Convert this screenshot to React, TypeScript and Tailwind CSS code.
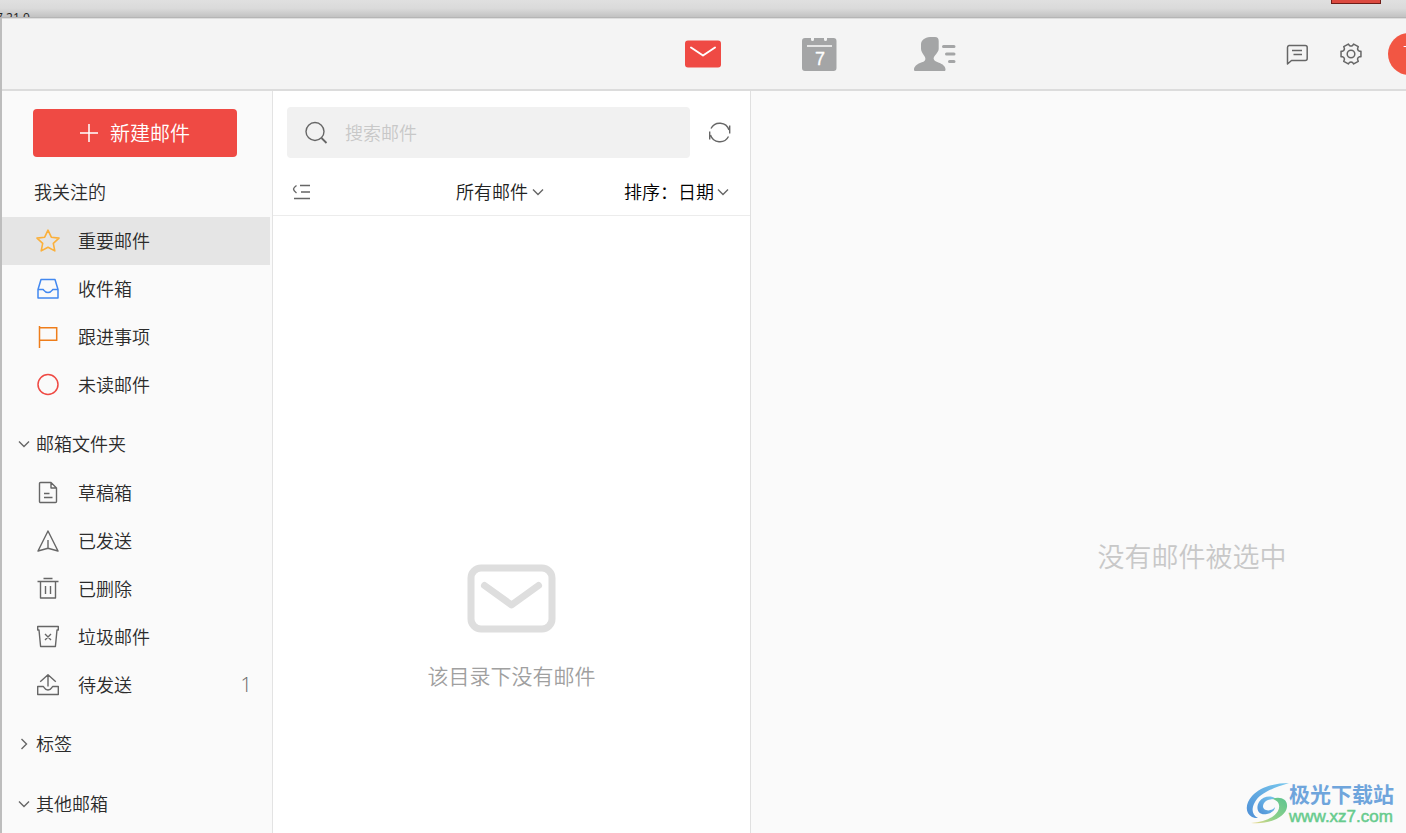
import React from "react";

const FONT =
  "font-['Noto_Sans_CJK_SC',sans-serif] font-[350]";

function Svg({
  w = 24,
  h = 24,
  className = "",
  sw = 1.4,
  children,
}: {
  w?: number;
  h?: number;
  className?: string;
  sw?: number;
  children: React.ReactNode;
}) {
  return (
    <svg
      width={w}
      height={h}
      viewBox={`0 0 ${w} ${h}`}
      fill="none"
      stroke="currentColor"
      strokeWidth={sw}
      strokeLinejoin="round"
      aria-hidden="true"
      className={`shrink-0 ${className}`}
    >
      {children}
    </svg>
  );
}

const gearPath = (() => {
  const at = (deg: number, r: number) => {
    const a = (deg * Math.PI) / 180;
    return `${(12 + r * Math.cos(a)).toFixed(2)} ${(12 + r * Math.sin(a)).toFixed(2)}`;
  };
  let d = "";
  for (let k = 0; k < 6; k++) {
    const a = k * 60;
    d += `${k ? "L" : "M"}${at(a - 15, 10.3)}L${at(a + 15, 10.3)}L${at(a + 19, 8.8)}Q${at(a + 30, 7.2)} ${at(a + 41, 8.8)}`;
  }
  return d + "Z";
})();

function Chevron({ dir = "down", className = "" }: { dir?: "down" | "right"; className?: string }) {
  return (
    <Svg w={12} h={12} className={`text-[#666] ${className}`}>
      <path d={dir === "down" ? "M1 3.5l5 5 5-5" : "M3.5 1l5 5-5 5"} strokeLinejoin="miter" />
    </Svg>
  );
}

type Item = { label: string; icon: React.ReactNode; active?: boolean; count?: number };

const followed: Item[] = [
  {
    label: "重要邮件",
    active: true,
    icon: (
      <Svg className="text-[#fbb03b]" sw={1.6}>
        <path d="M12 1.2l3.3 7 7.7.9-5.7 5.3 1.5 7.5L12 18.3l-6.8 3.6 1.5-7.5L1 9.1l7.7-.9z" />
      </Svg>
    ),
  },
  {
    label: "收件箱",
    icon: (
      <Svg className="text-[#4288f0]" sw={1.5}>
        <path d="M5 2.5h14l3 10v8.5H2v-8.5zM2 12.5h5.2c1 1.2 1.8 3 4.8 3s3.8-1.8 4.8-3H22" />
      </Svg>
    ),
  },
  {
    label: "跟进事项",
    icon: (
      <Svg className="text-[#ee7d1a]" sw={1.5}>
        <path d="M3.5 1v22M3.5 2.7h17.2v12.6H3.5" strokeLinejoin="miter" />
      </Svg>
    ),
  },
  {
    label: "未读邮件",
    icon: (
      <Svg className="text-[#ef4a44]" sw={1.5}>
        <circle cx="12" cy="11.5" r="10" />
      </Svg>
    ),
  },
];

const folders: Item[] = [
  {
    label: "草稿箱",
    icon: (
      <Svg>
        <path d="M4.5 1.5H15L20.5 7v13.5a1 1 0 0 1-1 1h-15a1 1 0 0 1-1-1v-18a1 1 0 0 1 1-1zM15 1.5V7h5.5M8 12.5h5.5M8 16.5h8.5" />
      </Svg>
    ),
  },
  {
    label: "已发送",
    icon: (
      <Svg>
        <path d="M12 2L2 22l10-2.7L22 22zM12 11v8.3" />
      </Svg>
    ),
  },
  {
    label: "已删除",
    icon: (
      <Svg>
        <path d="M7.5 1.5h9M1.5 4.5h21M4.5 4.5V21h15V4.5M9.5 9v8M14.5 9v8" />
      </Svg>
    ),
  },
  {
    label: "垃圾邮件",
    icon: (
      <Svg>
        <path d="M1.7 1.5h20.6V5H21l-1.6 16.5H4.6L3 5H1.7zM9 9l6 6M15 9l-6 6" />
      </Svg>
    ),
  },
  {
    label: "待发送",
    count: 1,
    icon: (
      <Svg>
        <path d="M4.2 8.8L12 1.8l7.8 7M12 2v11.5M1.7 13.5h5.6c1.2 1 1.2 3.5 4.7 3.5s3.5-2.5 4.7-3.5h5.6v8H1.7z" />
      </Svg>
    ),
  },
];

function NavItems({ items }: { items: Item[] }) {
  return (
    <ul>
      {items.map((it) => (
        <li key={it.label}>
          <a
            href="#"
            className={`mr-0.5 flex h-12 items-center gap-[18px] pr-[18px] pl-[34px] text-[18px] text-[#2b2b2b] ${it.active ? "bg-[#e5e5e5]" : ""}`}
          >
            <span className="text-[#666]">{it.icon}</span>
            <span className="flex-1 pb-0.5">{it.label}</span>
            {it.count !== undefined && (
              <span className="font-['Open_Sans',sans-serif] text-[20px] text-[#666]">{it.count}</span>
            )}
          </a>
        </li>
      ))}
    </ul>
  );
}

function GroupHeader({ label, dir }: { label: string; dir: "down" | "right" }) {
  return (
    <button
      type="button"
      aria-expanded={dir === "down"}
      className="mt-2.5 flex h-[50px] w-full items-center gap-1.5 pl-4 text-[18px] text-[#2b2b2b]"
    >
      <Chevron dir={dir} />
      <span className="pb-0.5">{label}</span>
    </button>
  );
}

function TitleStrip() {
  return (
    <div className="flex h-[18px] items-start justify-between overflow-hidden border-b border-[#b5b5b5] bg-linear-to-b from-[#e0e0e0] via-[#dadada] to-[#c2c2c2]">
      <span className="-ml-1 pt-2.5 font-['Open_Sans',sans-serif] text-[12px] leading-4 font-normal text-[#222]">7.21.0</span>
      <span className="mr-[25px] h-1 w-[50px] border border-t-0 border-[#6f1d18] bg-[#dc4a40]" />
    </div>
  );
}

function Header() {
  return (
    <header className="flex h-[73px] items-center overflow-hidden border-t border-b-2 border-t-[#dedede] border-b-[#dcdcdc] bg-[#f4f4f4]">
      <nav className="flex flex-1 pl-[45.8%]">
        <button type="button" aria-label="邮件" className="flex w-[116px] shrink-0 justify-center">
          <Svg w={36} h={34}>
            <rect y="3.5" width="36" height="27" rx="3" fill="#ef4a44" stroke="none" />
            <path d="M6 10.500l12 8 12-8" stroke="#fff" strokeWidth="2" strokeLinecap="round" />
          </Svg>
        </button>
        <button type="button" aria-label="日历" className="flex w-[116px] shrink-0 justify-center">
          <Svg w={36} h={34}>
            <path
              d="M4 1H10v1.500a1.500 1.500 0 0 0 3 0V1h10v1.500a1.500 1.500 0 0 0 3 0V1h6.500a3 3 0 0 1 3 3v27a3 3 0 0 1-3 3H4a3 3 0 0 1-3-3V4a3 3 0 0 1 3-3z"
              fill="#a4a5a6"
              stroke="none"
            />
            <path d="M6 9h25" stroke="#e6e6e6" strokeWidth="2" />
            <text x="19" y="28" textAnchor="middle" fill="#fff" stroke="#fff" strokeWidth="0.3" fontSize="18" fontWeight="400" fontFamily="Liberation Sans, sans-serif">
              7
            </text>
          </Svg>
        </button>
        <button type="button" aria-label="通讯录" className="flex w-[116px] shrink-0 justify-center">
          <Svg w={42} h={34}>
            <path
              d="M16 0h5c2.500 0 3.700 1.500 3.700 4v8c0 2-1.700 4-3.700 6.500-1.200 1.500-1.500 2.500-1.300 3.500.3 2 3 2.700 5.300 3.700 3.500 1.300 6.500 3.500 6.500 6.800 0 1-.5 1.500-1.500 1.500h-28.500C.5 34 0 33.500 0 32.500c0-2.500 2.500-5.200 6-6.500 2.500-1 5-1.500 5.300-3.500.3-1.500-.3-2.500-1.300-4C8 15.500 7 14 7 11.500V7C7.500 3 10.500.5 16 0z"
              fill="#a4a5a6"
              stroke="none"
            />
            <path d="M29.500 9.500H40M32.500 17H40M35.500 24.500H40" stroke="#a4a5a6" strokeWidth="3" strokeLinecap="round" />
          </Svg>
        </button>
      </nav>
      <div className="flex shrink-0 items-center text-[#666]">
        <button type="button" aria-label="消息" className="mr-[30px]">
          <Svg sw={1.5}>
            <path d="M4 3.500h16.200a2 2 0 0 1 2 2v11a2 2 0 0 1-2 2H6.500L2.500 22V5.500a2 2 0 0 1 1.500-2zM7 8.500h10M8.500 12.500h8.500" />
          </Svg>
        </button>
        <button type="button" aria-label="设置" className="mr-[25px]">
          <Svg sw={1.5}>
            <path d={gearPath} />
            <circle cx="12" cy="12" r="3.8" />
          </Svg>
        </button>
        <button
          type="button"
          aria-label="账户"
          className="-mr-6 flex size-[42px] items-center justify-center rounded-full bg-[#f25643] font-['Open_Sans',sans-serif] text-[20px] text-white"
        >
          T
        </button>
      </div>
    </header>
  );
}

function Sidebar() {
  return (
    <aside className="w-[271px] shrink-0 border-r border-[#e3e3e3] bg-[#fafafa] pt-[18px]">
      <button
        type="button"
        className="ml-[31px] flex h-12 w-[204px] items-center justify-center gap-3 rounded bg-[#ef4a44] text-[20px] text-white"
      >
        <Svg w={18} h={18} sw={1.5}>
          <path d="M9 0v18M0 9h18" />
        </Svg>
        新建邮件
      </button>
      <h2 className="mt-2.5 flex h-[50px] items-center pb-0.5 pl-8 text-[18px] text-[#2b2b2b]">我关注的</h2>
      <NavItems items={followed} />
      <GroupHeader label="邮箱文件夹" dir="down" />
      <NavItems items={folders} />
      <GroupHeader label="标签" dir="right" />
      <GroupHeader label="其他邮箱" dir="down" />
    </aside>
  );
}

function MailList() {
  return (
    <section className="w-[478px] shrink-0 border-r border-[#e0e0e0] bg-white">
      <div className="flex items-center pt-4 pr-[18px] pl-3.5">
        <label className="flex h-[51px] flex-1 items-center gap-[17px] rounded bg-[#f1f1f1] pl-[17px] text-[#666]">
          <Svg>
            <circle cx="11" cy="10.5" r="9" />
            <path d="M17.500 17l5 5" strokeWidth="1.8" />
          </Svg>
          <input
            type="text"
            aria-label="搜索邮件"
            placeholder="搜索邮件"
            className="min-w-0 flex-1 bg-transparent text-[18px] text-[#222] outline-none placeholder:text-[#c8c8c8]"
          />
        </label>
        <button type="button" aria-label="刷新" className="ml-[18px] text-[#666]">
          <Svg>
            <path d="M3 7.500a9.800 9.800 0 0 1 18 1.500M21.700 4.500v8M20.500 15.500a9.800 9.800 0 0 1-18-1.500M1.700 18.500v-8" />
          </Svg>
        </button>
      </div>
      <div className="mt-2.5 flex h-12 items-center justify-between border-b border-[#ececec] pr-[19px] pl-[15px] text-[18px]">
        <button type="button" aria-label="收起" className="mr-[66px] text-[#666]">
          <Svg>
            <path d="M12 5.500h10M13 12h9M6 18.500h16M8.500 5.500C6.500 7 5.500 8 5.500 9s1 2.500 3 4" />
          </Svg>
        </button>
        <div className="relative">
          <select aria-label="筛选" className="w-[90px] appearance-none bg-transparent text-[#222] outline-none">
            <option>所有邮件</option>
          </select>
          <Chevron className="pointer-events-none absolute top-2 right-0.5" />
        </div>
        <div className="flex items-center text-black">
          <label htmlFor="sort">排序：</label>
          <div className="relative">
            <select id="sort" className="w-[53px] appearance-none bg-transparent outline-none">
              <option>日期</option>
            </select>
            <Chevron className="pointer-events-none absolute top-2 right-0.5" />
          </div>
        </div>
      </div>
      <div className="flex flex-col items-center pt-[348px]">
        <Svg w={90} h={70} sw={7} className="text-[#dedede]">
          <rect x="4" y="4" width="81" height="61" rx="10" />
          <path d="M17.500 21.500l27 19.500 27-19.500" strokeLinecap="round" />
        </Svg>
        <p className="mt-[25px] text-[21px] leading-8 text-[#a0a0a0]">该目录下没有邮件</p>
      </div>
    </section>
  );
}

function Watermark() {
  return (
    <div className="absolute right-3 bottom-1.5 flex items-center">
      <svg width="43" height="42" viewBox="0 0 43 42" aria-hidden="true">
        <defs>
          <linearGradient id="wb" x1="0" y1="1" x2="1" y2="0">
            <stop offset="0" stopColor="#4e8fd6" />
            <stop offset="1" stopColor="#79c8ee" />
          </linearGradient>
          <linearGradient id="wg" x1="0" y1="1" x2="1" y2="0">
            <stop offset="0" stopColor="#f0d98a" />
            <stop offset=".4" stopColor="#8fd18a" />
            <stop offset="1" stopColor="#5cc490" />
          </linearGradient>
        </defs>
        <path d="M43 0C31 0 15 3 6 13c-7 8-7 17 0 21 2 1 4 1 6 1-6-3-7-9-3-16C14 10 27 5 43 0z" fill="url(#wb)" />
        <path d="M30 16c-4-4-13-3-17 3-4 7 0 14 8 12 5-1 8-4 8-7-2 3-6 4-9 3-4-1-4-6 0-9 3-2 7-2 10-2z" fill="url(#wb)" />
        <path d="M26 16c8-3 16 0 15 8C40 34 23 42 5 40c13-1 23-5 27-12 3-6 0-11-6-12z" fill="url(#wg)" />
      </svg>
      <div className="flex flex-col gap-0.5">
        <span className="text-[21px] leading-6 font-bold text-[#6fa5dc]">极光下载站</span>
        <span className="font-['Liberation_Sans',sans-serif] text-[17px] leading-5 font-normal text-[#67cb8d] [-webkit-text-stroke:0.5px]">
          www.xz7.com
        </span>
      </div>
    </div>
  );
}

export default function App() {
  return (
    <div className={`relative flex min-h-screen flex-col overflow-hidden bg-[#fafafa] ${FONT}`}>
      <TitleStrip />
      <div className="flex flex-1 flex-col border-l-2 border-[#bdbdbd]">
        <Header />
        <div className="flex flex-1">
          <Sidebar />
          <MailList />
          <main className="min-w-0 flex-1 overflow-hidden bg-[#fafafa]">
            <p className="min-w-[882px] pt-[445px] text-center text-[27px] leading-10 text-[#c8c8c8]">没有邮件被选中</p>
          </main>
        </div>
      </div>
      <Watermark />
    </div>
  );
}
